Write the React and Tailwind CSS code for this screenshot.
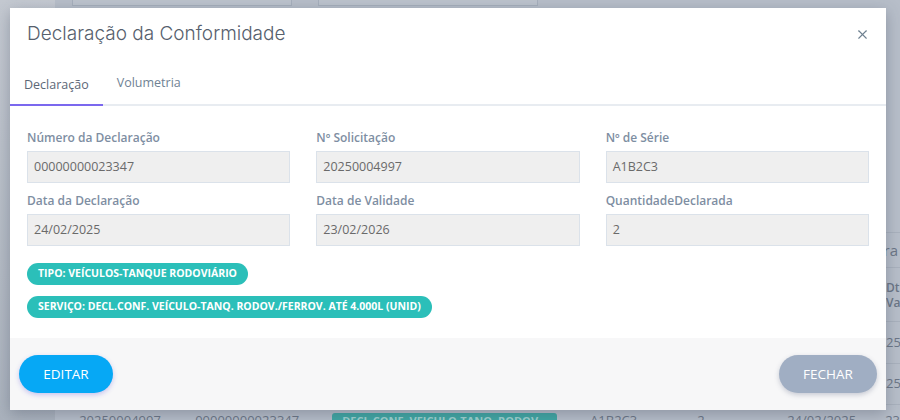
import { X } from "lucide-react";

const fields = [
    { label: "Número da Declaração", value: "00000000023347" },
    { label: "Nº Solicitação", value: "20250004997" },
    { label: "Nº de Série", value: "A1B2C3" },
    { label: "Data da Declaração", value: "24/02/2025" },
    { label: "Data de Validade", value: "23/02/2026" },
    { label: "QuantidadeDeclarada", value: "2" },
];

const BackgroundPage = () => (
    <div className="w-[900px] h-[420px] flex bg-[#b7bec9] text-[#6b7686]">
        <div className="w-[58px] h-full bg-gradient-to-b from-[#c4c9d1] to-[#aab2bd]" />
        <div className="flex-1 flex flex-col">
            {/* top filter boxes, mostly hidden */}
            <div className="flex gap-[26px] pl-[17px] h-[6px] shrink-0">
                <div className="w-[220px] h-[6px] border-b border-x border-[#a6afbc] bg-[#bcc3cd]" />
                <div className="w-[220px] h-[6px] border-b border-x border-[#a6afbc] bg-[#bcc3cd]" />
            </div>
            <div className="mt-[226px] shrink-0 border-t border-[#a9b1bd] h-[35px] flex items-center justify-end pr-[2px] text-[15px]">
                ra
            </div>
            <div className="shrink-0 border-t border-[#a9b1bd] h-[54px] flex items-center justify-end text-[12px] font-semibold leading-[15px]">
                <div className="w-[14px] overflow-hidden">Dt<br />Va</div>
            </div>
            <div className="shrink-0 border-t border-[#a9b1bd] h-[42px] flex items-center justify-end text-[13px]">
                <div className="w-[14px] overflow-hidden">25</div>
            </div>
            <div className="shrink-0 border-t border-[#a9b1bd] h-[41px] flex items-center justify-end text-[13px]">
                <div className="w-[14px] overflow-hidden">25</div>
            </div>
            <div className="shrink-0 border-t border-[#a9b1bd] h-[42px] flex items-start pt-[6px] text-[13px] whitespace-nowrap">
                <span className="w-[140px] pl-[24px]">20250004997</span>
                <span className="w-[137px]">00000000023347</span>
                <span className="w-[258px]">
                    <span className="inline-block rounded-[3px] bg-[#3ea7a3] px-[10px] text-[11px] font-bold text-[#9ed3d0] leading-[16px]">
                        DECL.CONF. VEICULO-TANQ. RODOV...
                    </span>
                </span>
                <span className="w-[107px]">A1B2C3</span>
                <span className="w-[90px]">2</span>
                <span className="w-[98px]">24/02/2025</span>
                <span>23</span>
            </div>
        </div>
    </div>
);

const Modal = () => (
    <div className="absolute left-[10px] top-[8px] w-[876px] h-[402px] bg-white shadow-[0_4px_14px_rgba(60,70,90,0.35)] flex flex-col">
        <div className="h-[52px] flex items-center justify-between pl-[17px] pr-[16px]">
            <h2 className="text-[19px] font-light text-[#56606d]" style={{ fontFamily: 'Inter, "Open Sans", sans-serif' }}>
                Declaração da Conformidade
            </h2>
            <X className="w-[15px] h-[15px] text-[#6e8190]" strokeWidth={1.8} />
        </div>

        <div className="h-[46px] flex border-b-2 border-[#e8ecf1]">
            <div className="px-[14px] pt-[6px] flex items-center border-b-2 border-[#7b68ee] -mb-[2px] text-[12.5px] text-[#5d6877]">
                Declaração
            </div>
            <div className="px-[14px] pt-[2px] flex items-center text-[12.5px] text-[#6f8294]">
                Volumetria
            </div>
        </div>

        <div className="flex-1 px-[17px] pt-[24px]">
            <div className="grid grid-cols-3 gap-x-[26px] gap-y-[10px]">
                {fields.map((f) => (
                    <div key={f.label}>
                        <label className="block text-[12px] leading-[16px] font-semibold text-[#7e8ea2] mb-[5px]">
                            {f.label}
                        </label>
                        <div className="h-[32px] flex items-center px-[6px] bg-[#efefef] border border-[#dbe2ea] text-[12.5px] text-[#6a6a6a]">
                            {f.value}
                        </div>
                    </div>
                ))}
            </div>
            <div className="mt-[17px] flex flex-col items-start gap-[11px]">
                <span className="h-[22px] flex items-center rounded-full bg-[#2bbfb9] px-[11px] text-[10.5px] font-bold text-white">
                    TIPO: VEÍCULOS-TANQUE RODOVIÁRIO
                </span>
                <span className="h-[22px] flex items-center rounded-full bg-[#2bbfb9] px-[11px] text-[10.5px] font-bold text-white">
                    SERVIÇO: DECL.CONF. VEÍCULO-TANQ. RODOV./FERROV. ATÉ 4.000L (UNID)
                </span>
            </div>
        </div>

        <div className="h-[72px] bg-[#f7f7f8] flex items-center justify-between px-[9px]">
            <button className="w-[94px] h-[38px] rounded-full bg-[#06a8f5] text-white text-[13.5px] shadow-[0_2px_5px_rgba(90,80,220,0.3)]">
                EDITAR
            </button>
            <button className="w-[98px] h-[38px] rounded-full bg-[#a0aec3] text-white text-[13.5px] shadow-[0_2px_5px_rgba(90,100,130,0.3)]">
                FECHAR
            </button>
        </div>
    </div>
);

const App = () => {
    return (
        <div className="relative w-[900px] h-[420px] overflow-hidden" style={{ fontFamily: '"Open Sans", "Noto Sans", sans-serif' }}>
            <BackgroundPage />
            <Modal />
        </div>
    );
};

export default App;
